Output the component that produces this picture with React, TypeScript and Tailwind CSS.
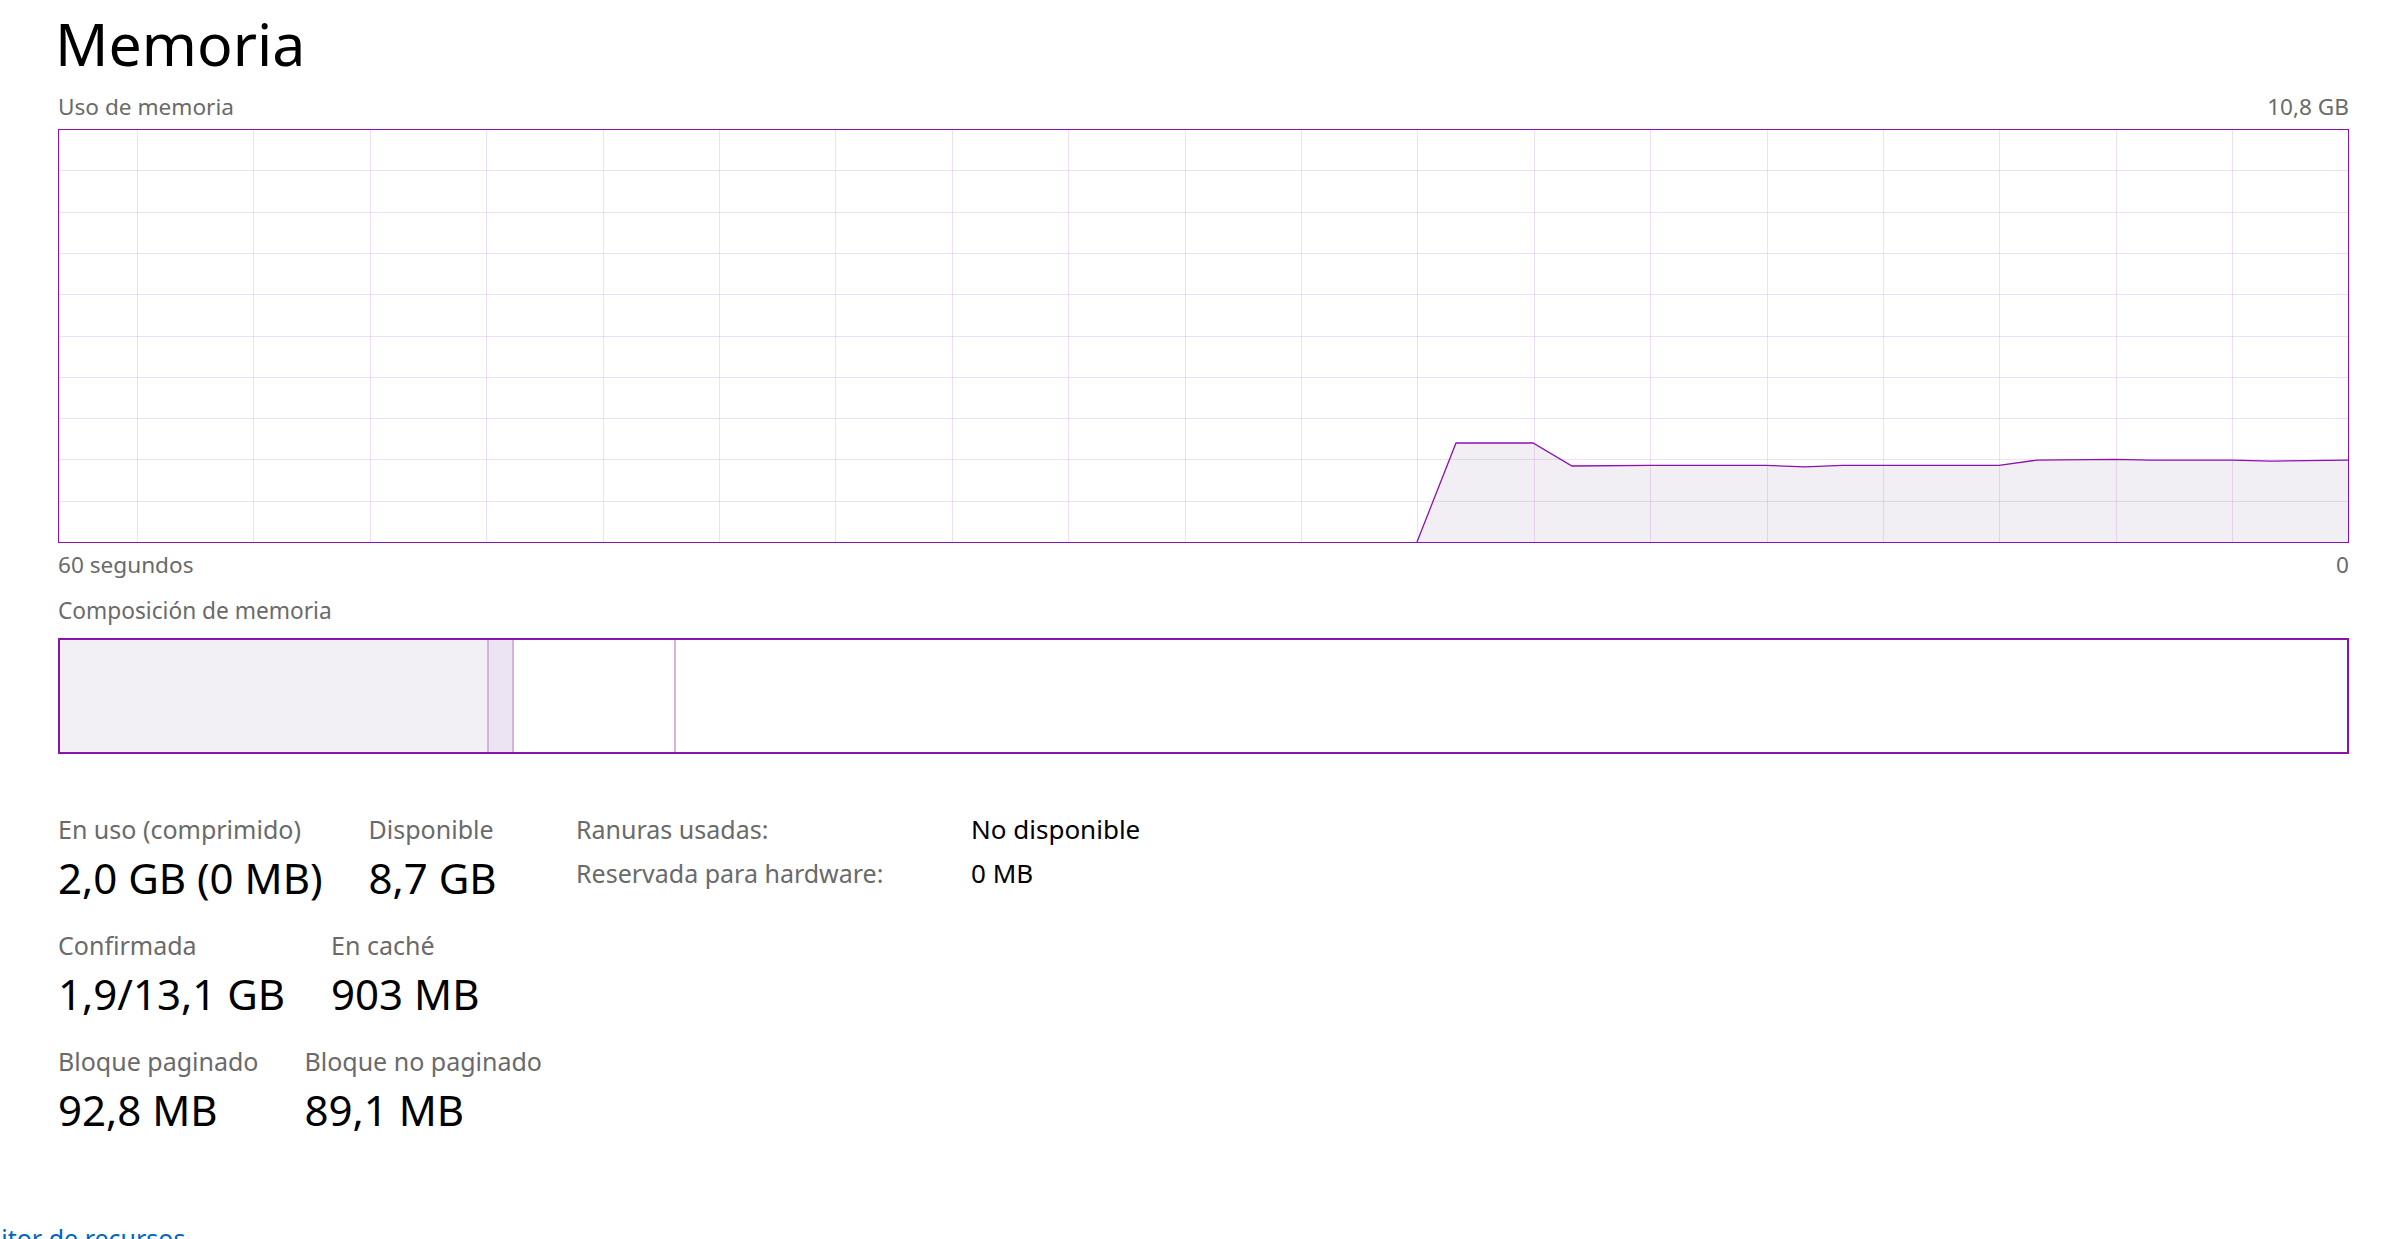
import React from "react";

const PURPLE = "#8b12ae";

// chart points, relative to the inner area of the usage graph (2289 x 412)
const usage: [number, number][] = [
  [1358, 412],
  [1397, 313],
  [1474, 313],
  [1513, 336],
  [1591, 335.4],
  [1707, 335.4],
  [1746, 336.8],
  [1783, 335.4],
  [1940, 335.4],
  [1978, 330.1],
  [2056, 329.4],
  [2091, 330.1],
  [2173, 330.1],
  [2212, 331.1],
  [2289, 330.1],
];

function UsageGraph() {
  const w = 2289;
  const h = 412;
  const line = usage.map(([x, y]) => `${x},${y}`).join(" ");
  const area = `${line} ${w},${h} ${usage[0][0]},${h}`;
  const rows = Array.from({ length: 9 }, (_, i) => Math.round((i + 1) * 41.3) - 0.5);
  const cols = Array.from({ length: 19 }, (_, i) => Math.round(78 + i * 116.4) + 0.5);

  return (
    <div className="h-[414px] w-full border border-[#8b12ae]">
      <svg width={w} height={h} viewBox={`0 0 ${w} ${h}`} className="block h-full w-full">
        <polygon points={area} fill="#f2eff4" />
        {rows.map((y) => (
          <line key={`r${y}`} x1={0} x2={w} y1={y} y2={y} stroke="#8b12ae" strokeOpacity={0.13} strokeWidth={1} />
        ))}
        {cols.map((x) => (
          <line key={`c${x}`} x1={x} x2={x} y1={0} y2={h} stroke="#8b12ae" strokeOpacity={0.13} strokeWidth={1} />
        ))}
        <polyline points={line} fill="none" stroke={PURPLE} strokeWidth={1.3} />
      </svg>
    </div>
  );
}

function Stat({ label, value }: { label: string; value: string }) {
  return (
    <div className="flex flex-col">
      <span className="text-[25px] leading-[34px] text-[#6a6a6a]">{label}</span>
      <span className="mt-[6px] text-[42px] leading-[52px] text-black">{value}</span>
    </div>
  );
}

export default function App() {
  return (
    <div
      className="relative h-[1239px] overflow-hidden bg-white pl-[58px] pr-[53px]"
      style={{ fontFamily: '"Noto Sans", "Open Sans", sans-serif' }}
    >
      <h1 className="-ml-[3px] h-[92px] text-[59px] leading-[86px] font-normal text-black">Memoria</h1>

      <div className="flex h-[37px] items-start justify-between text-[22.6px] leading-[30px] text-[#6a6a6a]">
        <span>Uso de memoria</span>
        <span>10,8 GB</span>
      </div>

      <UsageGraph />

      <div className="mt-[7px] flex items-start justify-between text-[22.6px] leading-[30px] text-[#6a6a6a]">
        <span>60 segundos</span>
        <span>0</span>
      </div>

      <div className="mt-[16px] h-[42px] text-[22.7px] leading-[30px] text-[#6a6a6a]">Composición de memoria</div>

      <div className="flex h-[116px] w-full border-2 border-[#8b12ae]">
        <div className="w-[429px] border-r-2 border-[#d4b3df] bg-[#f3f0f5]" />
        <div className="w-[25px] border-r-2 border-[#d4b3df] bg-[#ede4f2]" />
        <div className="w-[162px] border-r-2 border-[#d4b3df] bg-white" />
        <div className="flex-1 bg-white" />
      </div>

      <div className="mt-[58px] flex">
        <div className="flex w-[518px] shrink-0 flex-col gap-[24px]">
          <div className="flex gap-[46px]">
            <Stat label="En uso (comprimido)" value="2,0 GB (0 MB)" />
            <Stat label="Disponible" value="8,7 GB" />
          </div>
          <div className="flex gap-[46px]">
            <Stat label="Confirmada" value="1,9/13,1 GB" />
            <Stat label="En caché" value="903 MB" />
          </div>
          <div className="flex gap-[46px]">
            <Stat label="Bloque paginado" value="92,8 MB" />
            <Stat label="Bloque no paginado" value="89,1 MB" />
          </div>
        </div>

        <div className="grid h-fit grid-cols-[395px_auto] gap-y-[10px] leading-[34px]">
          <span className="text-[25px] text-[#6a6a6a]">Ranuras usadas:</span>
          <span className="text-[26px] text-black">No disponible</span>
          <span className="text-[25px] text-[#6a6a6a]">Reservada para hardware:</span>
          <span className="text-[26px] text-black">0 MB</span>
        </div>
      </div>

      <div className="absolute bottom-[-16px] left-[-144px] text-[25px] leading-[34px] text-[#0067c0]">
        Abrir el Monitor de recursos
      </div>
    </div>
  );
}
